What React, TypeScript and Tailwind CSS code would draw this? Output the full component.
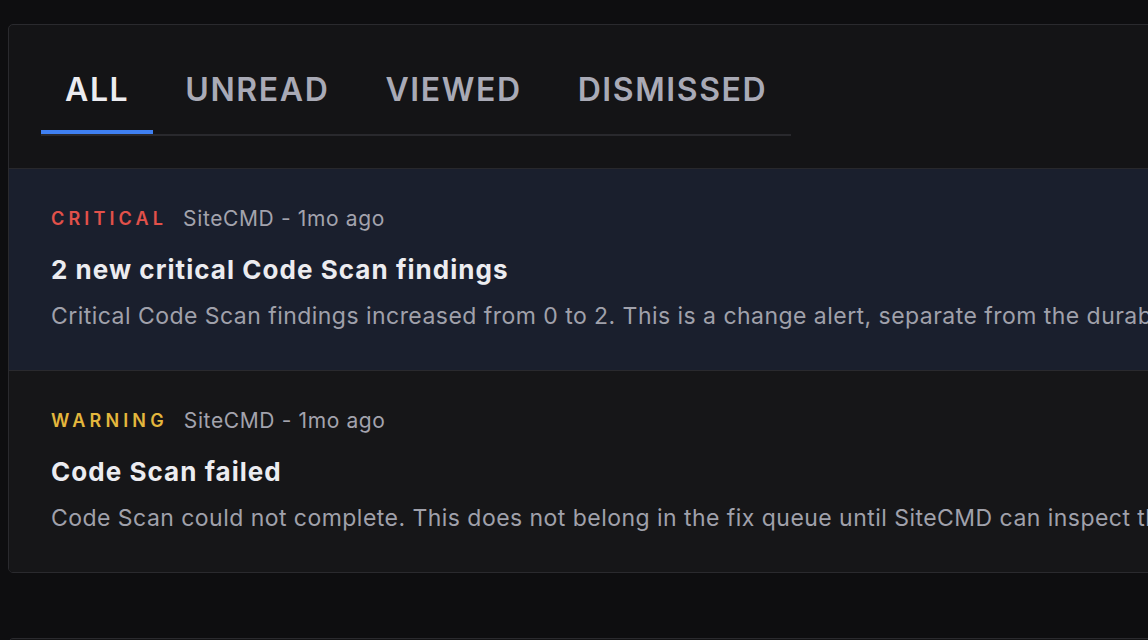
import { FC } from "react";

const tabs = ["ALL", "UNREAD", "VIEWED", "DISMISSED"];

type Alert = {
  level: string;
  levelClass: string;
  source: string;
  title: string;
  body: string;
  rowClass: string;
};

const alerts: Alert[] = [
  {
    level: "CRITICAL",
    levelClass: "text-[#e2514a]",
    source: "SiteCMD - 1mo ago",
    title: "2 new critical Code Scan findings",
    body: "Critical Code Scan findings increased from 0 to 2. This is a change alert, separate from the durable findings list in the fix queue.",
    rowClass: "bg-[#1a1f2d]",
  },
  {
    level: "WARNING",
    levelClass: "text-[#e4b73d]",
    source: "SiteCMD - 1mo ago",
    title: "Code Scan failed",
    body: "Code Scan could not complete. This does not belong in the fix queue until SiteCMD can inspect the repository again.",
    rowClass: "bg-[#161618]",
  },
];

const App: FC = () => {
  return (
    <div
      className="h-[640px] w-[1148px] overflow-hidden bg-[#0e0e10] pl-2 pt-6"
      style={{ fontFamily: "Inter, 'Noto Sans', sans-serif" }}
    >
      <div className="w-[1400px] rounded-[5px] border border-[#2a2a2e] bg-[#141416] overflow-hidden">
        <div className="px-8 pt-[26px] pb-8 border-b border-[#28282c]">
          <div className="inline-flex gap-2 border-b-2 border-[#29292d]">
            {tabs.map((t, i) => (
              <div key={t} className="flex flex-col">
                <span
                  className={`px-6 pt-[19px] pb-[20px] text-[32px] leading-[40px] font-semibold tracking-[0.05em] ${
                    i === 0 ? "text-[#ececf0]" : "text-[#a9aab6]"
                  }`}
                >
                  {t}
                </span>
                <div className={`h-1 ${i === 0 ? "bg-[#3f80f2]" : "bg-transparent"}`} />
              </div>
            ))}
          </div>
        </div>
        {alerts.map((a, i) => (
          <div
            key={a.title}
            className={`${a.rowClass} px-[42px] pt-[36px] pb-[39px] ${i > 0 ? "border-t border-[#2a2a2e]" : ""}`}
          >
            <div className="flex items-center gap-4 whitespace-nowrap">
              <span className={`text-[18px] leading-[28px] font-semibold tracking-[0.23em] ${a.levelClass}`}>
                {a.level}
              </span>
              <span className="text-[21px] leading-[28px] tracking-[0.03em] text-[#a3a3ad]">{a.source}</span>
            </div>
            <div className="mt-[21px] text-[26px] leading-[32px] font-bold tracking-[0.04em] text-[#ececf0] whitespace-nowrap">
              {a.title}
            </div>
            <div className="mt-[15px] text-[23px] leading-[30px] tracking-[0.02em] text-[#a0a1ab] whitespace-nowrap">
              {a.body}
            </div>
          </div>
        ))}
      </div>
      <div className="mt-[65px] h-10 w-[1400px] rounded-[5px] border border-[#2a2a2e] bg-[#141416]" />
    </div>
  );
};

export default App;
